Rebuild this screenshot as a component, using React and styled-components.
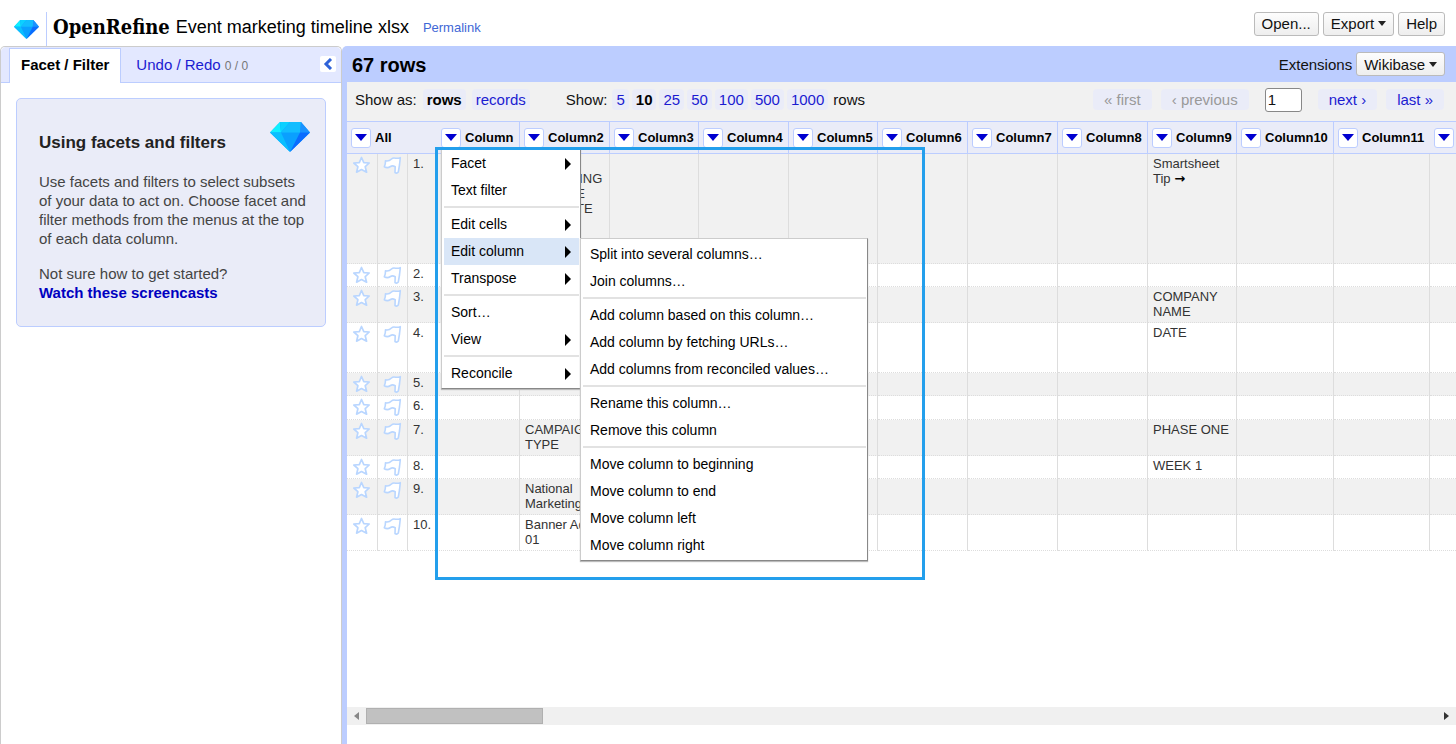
import React from 'react'
import styled, { createGlobalStyle, css } from 'styled-components';

const GlobalStyle = createGlobalStyle`
    * {
        box-sizing: border-box;
    }

    body {
        margin: 0;
        background: #fff;
        color: #111;
        font-family: "Liberation Sans", Arial, sans-serif;
        font-size: 15px;
        line-height: 19px;
    }

    button, input {
        font: inherit;
        color: inherit;
    }

    a {
        color: #1b1bd1;
        text-decoration: none;
    }
`;

const Page = styled.div`
    display: flex;
    flex-direction: column;
    height: 100vh;
    overflow: hidden;
`;

const Header = styled.header`
    display: flex;
    align-items: center;
    height: 46px;
    padding: 8px 11px 0 14px;
`;

const LogoBox = styled.a`
    display: flex;
    align-items: center;
    height: 34px;
    margin-top: 4px;
    padding-right: 7px;
    border-right: 1px solid #bccdff;
`;

const AppName = styled.h1`
    margin: 0 6px;
    color: #000;
    font: bold 20px/28px "DejaVu Serif Condensed", "DejaVu Serif", serif;
`;

const ProjectName = styled.a`
    color: #000;
    font-size: 18px;
`;

const Permalink = styled.a`
    margin-left: 14px;
    color: #3f67d6;
    font-size: 13px;
`;

const HeaderActions = styled.div`
    display: flex;
    gap: 4px;
    margin: 0 0 7px auto;
`;

const Button = styled.button`
    display: flex;
    align-items: center;
    gap: 4px;
    height: 24px;
    padding: 0 7px;
    border: 1px solid #bbb;
    border-radius: 3px;
    background: linear-gradient(#fdfdfd, #eee);
    white-space: nowrap;
`;

const Main = styled.main`
    display: flex;
    flex: 1;
    min-height: 0;
`;

const LeftPanel = styled.aside`
    flex: none;
    width: 342px;
    border: 1px solid #ccc;
    border-bottom: 0;
    border-radius: 5px 5px 0 0;
`;

const Tabs = styled.nav`
    display: flex;
    align-items: flex-start;
    gap: 3px;
    height: 36px;
    padding: 1px 5px 0 8px;
    border-bottom: 1px solid #bccdff;
    border-radius: 5px 5px 0 0;
    background: #e3e8ff;
`;

const Tab = styled.a`
    height: 35px;
    padding: 6px 11px 0;
    border: 1px solid transparent;
    border-bottom: 0;

    small {
        color: #777;
        font-size: 12px;
    }

    ${props => props.$active && css`
        border-color: #bccdff;
        background: #fff;
        color: #000;
        font-weight: bold;
    `}
`;

const CollapseButton = styled.button`
    display: flex;
    align-items: center;
    justify-content: center;
    width: 16px;
    height: 16px;
    margin: 8px 0 0 auto;
    padding: 0;
    border: 0;
    border-radius: 2px;
    background: #fff;
`;

const HelpBox = styled.section`
    margin: 15px 15px 0;
    padding: 23px 15px 24px 22px;
    border: 1px solid #bccdff;
    border-radius: 5px;
    background: #eaecf8;
    color: #444;

    p {
        margin: 0 0 16px;
    }

    p:last-child {
        margin: 0;
    }

    p a {
        color: #0000c0;
        font-weight: bold;
    }
`;

const HelpTitle = styled.div`
    display: flex;
    justify-content: space-between;
    margin-bottom: 19px;

    h2 {
        margin: 11px 0 0;
        color: #222;
        font-size: 17px;
        line-height: 20px;
    }
`;

const RightPanel = styled.section`
    display: flex;
    flex: 1;
    flex-direction: column;
    min-width: 0;
    border-left: 5px solid #bccdff;
    border-radius: 5px 0 0 0;
`;

const SummaryBar = styled.div`
    display: flex;
    align-items: center;
    flex: none;
    gap: 4px;
    height: 36px;
    padding: 0 11px 0 5px;
    background: #bccdff;

    h2 {
        margin: 2px auto 0 0;
        color: #000;
        font-size: 20px;
    }
`;

const ViewControls = styled.div`
    display: flex;
    align-items: center;
    flex: none;
    height: 39px;
    padding: 0 12px 4px 8px;
    background: #f1f1f1;
`;

const ModeOptions = styled.div`
    display: flex;
    align-items: center;
    gap: 6px;
`;

const SizeOptions = styled.div`
    display: flex;
    align-items: center;
    gap: 3px;
    margin-left: 36px;

    span {
        margin-right: 2px;
    }

    span:last-child {
        margin: 0 0 0 2px;
    }
`;

const Option = styled.a`
    padding: 1px 4px;
    border-radius: 4px;
    background: #eaecf8;

    ${props => props.$selected && css`
        color: #000;
        font-weight: bold;
    `}
`;

const Pager = styled.div`
    display: flex;
    align-items: center;
    gap: 9px;
    margin-left: auto;
`;

const PageLink = styled.a`
    padding: 1px 11px;
    border-radius: 4px;
    background: #eaecf8;
    color: ${props => props.$disabled ? '#999' : '#1b1bd1'};
`;

const PageInput = styled.input`
    width: 37px;
    height: 24px;
    margin: 0 7px;
    padding: 0 2px;
    border: 1px solid #888;
    border-radius: 3px;
    background: #fff;
`;

const DataView = styled.div`
    position: relative;
    flex: 1;
    min-height: 0;
    overflow: hidden;
`;

const Table = styled.table`
    width: 100%;
    min-width: 1109px;
    border-collapse: separate;
    border-spacing: 0;
    table-layout: fixed;
    font-size: 13px;
    line-height: 15px;
`;

const HeadCell = styled.th`
    height: 33px;
    padding: 0 0 0 4px;
    border-top: 1px solid #bccdff;
    border-bottom: 1px solid #bccdff;
    border-right: ${props => props.$open ? 0 : '1px solid #bccdff'};
    background: #eaecf8;
    color: #000;
    text-align: left;

    div {
        display: flex;
        align-items: center;
        gap: 4px;
    }
`;

const MenuButton = styled.button`
    display: flex;
    align-items: center;
    justify-content: center;
    width: 20px;
    height: 20px;
    padding: 0;
    border: 1px solid #bccdff;
    border-radius: 3px;
    background: #fff;
`;

const Row = styled.tr`
    height: ${props => props.$height}px;
    background: ${props => props.$odd ? '#f1f1f1' : '#fff'};
`;

const Cell = styled.td`
    padding: 2px 5px;
    border-right: 1px solid #ddd;
    border-bottom: 1px dotted #ddd;
    color: #333;
    vertical-align: top;
    white-space: pre-line;

    &:last-child {
        border-right: 0;
    }

    ${props => props.$icon && css`
        padding: 2px 5px 0;

        svg {
            display: block;
        }
    `}
`;

const Highlight = styled.div`
    position: absolute;
    top: 26px;
    left: 88px;
    width: 490px;
    height: 433px;
    border: 3px solid #239fec;
    pointer-events: none;
`;

const Menu = styled.div`
    position: absolute;
    top: ${props => props.$top}px;
    left: ${props => props.$left}px;
    width: ${props => props.$width}px;
    padding: 2px 1px 1px 2px;
    border: 1px solid #ccc;
    border-right-color: #888;
    border-bottom-color: #888;
    background: #fff;
    box-shadow: 0 1px 1px #bbb;
`;

const MenuItem = styled.button`
    display: flex;
    align-items: center;
    justify-content: space-between;
    width: 100%;
    height: 27px;
    padding: 0 8px 0 7px;
    border: 0;
    background: ${props => props.$active ? '#d9e6f7' : 'none'};
    color: #000;
    font-size: 14px;
    text-align: left;
`;

const Separator = styled.hr`
    height: 2px;
    margin: 2px 0 3px;
    border: 0;
    background: #e2e2e2;
`;

const Scrollbar = styled.div`
    display: flex;
    flex: none;
    align-items: center;
    height: 18px;
    margin-bottom: 19px;
    background: #f0f0f0;
`;

const ScrollButton = styled.button`
    display: flex;
    align-items: center;
    justify-content: center;
    width: 19px;
    height: 18px;
    padding: 0;
    border: 0;
    background: none;
`;

const Thumb = styled.div`
    width: 16%;
    height: 16px;
    margin-right: auto;
    border: 1px solid #b0b0b0;
    background: #c1c1c1;
`;

const Diamond = ({ width, height }) => (
    <svg width={width} height={height} viewBox="0 0 40 30" preserveAspectRatio="none">
        <path d="M10 0H31L40 10.500L20 30L0 10.500Z" fill="#0aa0ff" />
        <path d="M10 0L0 10.500H11Z" fill="#0ff0ff" />
        <path d="M10 0H20L11 10.500Z" fill="#0cd0ff" />
        <path d="M20 0H31L30 10.500H11Z" fill="#12bdff" />
        <path d="M31 0L40 10.500H30Z" fill="#1a92ff" />
        <path d="M0 10.500H11L20 30Z" fill="#0abfff" />
        <path d="M30 10.500H40L20 30Z" fill="#0a6cff" />
    </svg>
)

const Caret = () => (
    <svg width="8" height="5" viewBox="0 0 8 5"><path d="M0 0H8L4 5Z" fill="#222" /></svg>
)

const DownArrow = () => (
    <svg width="12" height="7" viewBox="0 0 12 7"><path d="M0 0H12L6 7Z" fill="#0000d0" /></svg>
)

const RightArrow = () => (
    <svg width="6" height="12" viewBox="0 0 6 12"><path d="M0 0L6 6L0 12Z" fill="#000" /></svg>
)

const Star = () => (
    <svg width="19" height="18" viewBox="0 0 19 18" fill="#fff" stroke="#b9d6ff" strokeWidth="1.7" strokeLinejoin="round">
        <path d="M9.500 1.500L11.800 6.600L17.200 7L13.200 10.700L14.600 16.200L9.500 13.600L4.600 16.200L5.900 10.700L1.800 7L7.300 6.600Z" />
    </svg>
)

const Flag = () => (
    <svg width="19" height="19" viewBox="0 0 19 19" fill="#fff" stroke="#b9d6ff" strokeWidth="1.6" strokeLinejoin="round">
        <path d="M2.500 4.800Q6 5.500 8.500 3Q10 1.500 12.500 2.200Q15 2.600 17.300 1.700L16.500 9L15.300 16Q13.800 17.800 12 16.500L12.200 10.800Q9.500 9.200 7.500 10.500Q4.500 12.500 1.300 10.800Q2.600 8 2.500 4.800Z" />
    </svg>
)

const Arrow = styled.b`
    color: #000;
    font-family: "DejaVu Sans", sans-serif;
    line-height: 1;
`;

const columns = [
    { name: 'Column', width: 83 },
    { name: 'Column2', width: 90 },
    { name: 'Column3', width: 89 },
    { name: 'Column4', width: 90 },
    { name: 'Column5', width: 89 },
    { name: 'Column6', width: 90 },
    { name: 'Column7', width: 90 },
    { name: 'Column8', width: 90 },
    { name: 'Column9', width: 89 },
    { name: 'Column10', width: 97 },
    { name: 'Column11', width: 96 },
]

const rows = [
    { height: 110, cells: { Column2: 'EVENT MARKETING TIMELINE TEMPLATE', Column9: <>Smartsheet Tip <Arrow>→</Arrow></> } },
    { height: 23, cells: {} },
    { height: 36, cells: { Column9: 'COMPANY NAME' } },
    { height: 50, cells: { Column9: 'DATE' } },
    { height: 23, cells: {} },
    { height: 24, cells: {} },
    { height: 36, cells: { Column2: 'CAMPAIGN TYPE', Column9: 'PHASE ONE' } },
    { height: 23, cells: { Column9: 'WEEK 1' } },
    { height: 36, cells: { Column2: 'National Marketing' } },
    { height: 36, cells: { Column2: 'Banner Ad\n01' } },
]

const columnMenu = [
    { label: 'Facet', submenu: true },
    { label: 'Text filter' },
    null,
    { label: 'Edit cells', submenu: true },
    { label: 'Edit column', submenu: true, active: true },
    { label: 'Transpose', submenu: true },
    null,
    { label: 'Sort…' },
    { label: 'View', submenu: true },
    null,
    { label: 'Reconcile', submenu: true },
]

const editColumnMenu = [
    { label: 'Split into several columns…' },
    { label: 'Join columns…' },
    null,
    { label: 'Add column based on this column…' },
    { label: 'Add column by fetching URLs…' },
    { label: 'Add columns from reconciled values…' },
    null,
    { label: 'Rename this column…' },
    { label: 'Remove this column' },
    null,
    { label: 'Move column to beginning' },
    { label: 'Move column to end' },
    { label: 'Move column left' },
    { label: 'Move column right' },
]

const MenuList = ({ items, top, left, width }) => (
    <Menu role="menu" $top={top} $left={left} $width={width}>
        {items.map((item, i) => item ? (
            <MenuItem key={i} role="menuitem" $active={item.active}>
                {item.label}
                {item.submenu && <RightArrow />}
            </MenuItem>
        ) : <Separator key={i} />)}
    </Menu>
)

const DataTable = () => (
    <Table>
        <colgroup>
            <col width="31" />
            <col width="30" />
            <col width="29" />
            {columns.map(column => <col key={column.name} width={column.width} />)}
            <col />
        </colgroup>
        <thead>
            <tr>
                <HeadCell colSpan="3" $open>
                    <div><MenuButton aria-label="All menu"><DownArrow /></MenuButton>All</div>
                </HeadCell>
                {columns.map(column => (
                    <HeadCell key={column.name} $open={column.name === 'Column11'}>
                        <div>
                            <MenuButton aria-label={`${column.name} menu`}><DownArrow /></MenuButton>
                            {column.name}
                        </div>
                    </HeadCell>
                ))}
                <HeadCell $open>
                    <div><MenuButton aria-label="Column12 menu"><DownArrow /></MenuButton></div>
                </HeadCell>
            </tr>
        </thead>
        <tbody>
            {rows.map((row, i) => (
                <Row key={i} $height={row.height} $odd={i % 2 === 0}>
                    <Cell $icon><Star /></Cell>
                    <Cell $icon><Flag /></Cell>
                    <Cell>{i + 1}.</Cell>
                    {columns.map(column => <Cell key={column.name}>{row.cells[column.name]}</Cell>)}
                    <Cell />
                </Row>
            ))}
        </tbody>
    </Table>
)

const App = () => {
    return (
        <Page>
            <GlobalStyle />
            <Header>
                <LogoBox href="#" aria-label="Home"><Diamond width={25} height={19} /></LogoBox>
                <AppName>OpenRefine</AppName>
                <ProjectName href="#">Event marketing timeline xlsx</ProjectName>
                <Permalink href="#">Permalink</Permalink>
                <HeaderActions>
                    <Button>Open...</Button>
                    <Button>Export <Caret /></Button>
                    <Button>Help</Button>
                </HeaderActions>
            </Header>
            <Main>
                <LeftPanel>
                    <Tabs>
                        <Tab href="#" $active>Facet / Filter</Tab>
                        <Tab href="#">Undo / Redo <small>0 / 0</small></Tab>
                        <CollapseButton aria-label="Hide panel">
                            <svg width="10" height="12" viewBox="0 0 10 12" fill="none" stroke="#2f63d8" strokeWidth="3">
                                <path d="M8 1L3 6L8 11" />
                            </svg>
                        </CollapseButton>
                    </Tabs>
                    <HelpBox>
                        <HelpTitle>
                            <h2>Using facets and filters</h2>
                            <Diamond width={40} height={30} />
                        </HelpTitle>
                        <p>Use facets and filters to select subsets of your data to act on. Choose facet and filter methods from the menus at the top of each data column.</p>
                        <p>Not sure how to get started?<br /><a href="#">Watch these screencasts</a></p>
                    </HelpBox>
                </LeftPanel>
                <RightPanel>
                    <SummaryBar>
                        <h2>67 rows</h2>
                        <span>Extensions</span>
                        <Button>Wikibase <Caret /></Button>
                    </SummaryBar>
                    <ViewControls>
                        <ModeOptions>
                            <span>Show as:</span>
                            <Option href="#" $selected>rows</Option>
                            <Option href="#">records</Option>
                        </ModeOptions>
                        <SizeOptions>
                            <span>Show:</span>
                            {[5, 10, 25, 50, 100, 500, 1000].map(size => (
                                <Option key={size} href="#" $selected={size === 10}>{size}</Option>
                            ))}
                            <span>rows</span>
                        </SizeOptions>
                        <Pager>
                            <PageLink href="#" $disabled>« first</PageLink>
                            <PageLink href="#" $disabled>‹ previous</PageLink>
                            <PageInput aria-label="Page" defaultValue="1" />
                            <PageLink href="#">next ›</PageLink>
                            <PageLink href="#">last »</PageLink>
                        </Pager>
                    </ViewControls>
                    <DataView>
                        <DataTable />
                        <MenuList items={columnMenu} top={26} left={94} width={140} />
                        <MenuList items={editColumnMenu} top={117} left={233} width={288} />
                        <Highlight />
                    </DataView>
                    <Scrollbar>
                        <ScrollButton aria-label="Scroll left">
                            <svg width="5" height="8" viewBox="0 0 5 8"><path d="M5 0V8L0 4Z" fill="#888" /></svg>
                        </ScrollButton>
                        <Thumb />
                        <ScrollButton aria-label="Scroll right">
                            <svg width="5" height="8" viewBox="0 0 5 8"><path d="M0 0V8L5 4Z" fill="#333" /></svg>
                        </ScrollButton>
                    </Scrollbar>
                </RightPanel>
            </Main>
        </Page>
    )
}

export default App
